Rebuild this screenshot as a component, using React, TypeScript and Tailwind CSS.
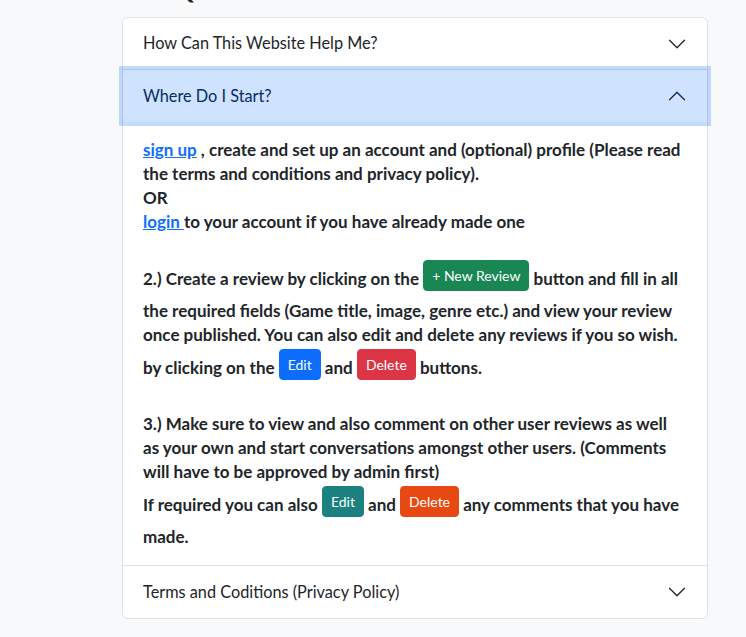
import React from "react";

const Chevron = ({ up = false, color = "#212529" }: { up?: boolean; color?: string }) => (
  <svg
    width="20"
    height="20"
    viewBox="0 0 16 16"
    fill={color}
    className={up ? "rotate-180" : ""}
  >
    <path
      fillRule="evenodd"
      d="M1.646 4.646a.5.5 0 0 1 .708 0L8 10.293l5.646-5.647a.5.5 0 0 1 .708.708l-6 6a.5.5 0 0 1-.708 0l-6-6a.5.5 0 0 1 0-.708z"
    />
  </svg>
);

const Btn = ({ children, bg }: { children: React.ReactNode; bg: string }) => (
  <span
    className={`inline-block mt-[2px] mb-[8px] align-[4px] rounded-[4px] border px-2 py-1 text-[14px] leading-[21px] font-normal text-white ${bg}`}
  >
    {children}
  </span>
);

export default function App() {
  return (
    <div
      className="min-h-screen bg-[#f8f9fa] overflow-hidden"
      style={{ fontFamily: "Lato, 'Noto Sans', sans-serif" }}
    >
      <div className="ml-[122px] w-[586px]">
        <h2 className="-mt-[33px] mb-[12px] pl-[9px] text-[32px] leading-[38px] font-medium text-[#212529]">
          FAQ
        </h2>
        <div className="rounded-[6px] border border-[#dee2e6] bg-white">
          <div className="flex h-[52px] items-center justify-between px-5 border-b border-[#dee2e6] text-[16.3px] font-normal text-[#212529]">
            <span>How Can This Website Help Me?</span>
            <Chevron />
          </div>
          <div className="border-b border-[#dee2e6]">
            <div className="relative z-10 flex h-[52px] items-center justify-between bg-[#cfe2ff] px-5 text-[16.3px] font-normal text-[#052c65] shadow-[0_0_0_4px_rgba(13,110,253,0.25)]">
              <span>Where Do I Start?</span>
              <Chevron up color="#052c65" />
            </div>
            <div className="px-5 py-4 text-[17px] leading-[24px] font-bold text-[#212529]">
              <p>
                <a href="#" className="text-[#0d6efd] underline">sign up</a> , create and set up an account and (optional) profile (Please read
                <br />
                the terms and conditions and privacy policy).
                <br />
                OR
                <br />
                <a href="#" className="text-[#0d6efd] underline">login </a>to your account if you have already made one
                <br />
                <br />
                2.) Create a review by clicking on the <Btn bg="bg-[#198754] border-[#198754]">+ New Review</Btn> button and fill in all
                <br />
                the required fields (Game title, image, genre etc.) and view your review
                <br />
                once published. You can also edit and delete any reviews if you so wish.
                <br />
                by clicking on the <Btn bg="bg-[#0d6efd] border-[#0d6efd]">Edit</Btn> and <Btn bg="bg-[#dc3545] border-[#dc3545]">Delete</Btn> buttons.
                <br />
                <br />
                3.) Make sure to view and also comment on other user reviews as well
                <br />
                as your own and start conversations amongst other users. (Comments
                <br />
                will have to be approved by admin first)
                <br />
                If required you can also <Btn bg="bg-[#1a8080] border-[#1a8080]">Edit</Btn> and <Btn bg="bg-[#e84812] border-[#e84812]">Delete</Btn> any comments that you have
                <br />
                made.
              </p>
            </div>
          </div>
          <div className="flex h-[52px] items-center justify-between px-5 text-[16.3px] font-normal text-[#212529]">
            <span>Terms and Coditions (Privacy Policy)</span>
            <Chevron />
          </div>
        </div>
      </div>
    </div>
  );
}
